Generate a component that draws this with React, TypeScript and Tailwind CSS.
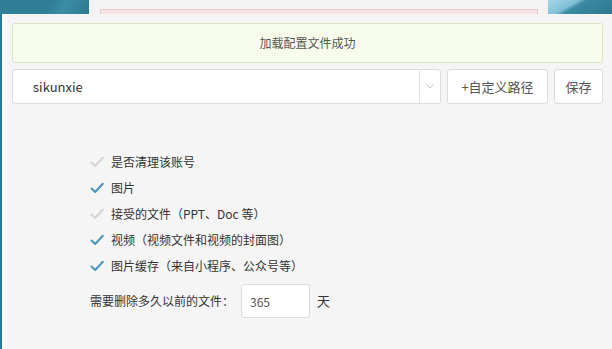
import { useState } from 'react';

type Option = {
  label: string;
  checked: boolean;
};

const initialOptions: Option[] = [
  { label: '是否清理该账号', checked: false },
  { label: '图片', checked: true },
  { label: '接受的文件（PPT、Doc 等）', checked: false },
  { label: '视频（视频文件和视频的封面图）', checked: true },
  { label: '图片缓存（来自小程序、公众号等）', checked: true },
];

const CheckMark = ({ checked }: { checked: boolean }) => (
  <svg width="14" height="12" viewBox="0 0 14 12" className="shrink-0">
    <path
      d="M1.5 6.5 L5.2 10 L12.8 1.8"
      fill="none"
      stroke={checked ? '#4d93b9' : '#d4d4d4'}
      strokeWidth="2"
      strokeLinecap="round"
      strokeLinejoin="round"
    />
  </svg>
);

const App = () => {
  const [options, setOptions] = useState<Option[]>(initialOptions);
  const [days, setDays] = useState('365');

  const toggle = (index: number) => {
    setOptions(options.map((o, i) => (i === index ? { ...o, checked: !o.checked } : o)));
  };

  return (
    <div
      className="flex h-[349px] w-[612px] flex-col overflow-hidden bg-[#2d7a92] text-[#333]"
      style={{ fontFamily: '"Noto Sans CJK SC", "Noto Sans", sans-serif' }}
    >
      {/* page behind the dialog */}
      <div className="flex h-[14px] shrink-0">
        <div className="w-[89px] bg-[linear-gradient(120deg,#2f7f98_0%,#2f7f98_55%,#3b8ea6_70%,#2c7890_100%)]" />
        <div className="flex w-[459px] flex-col bg-[#f3f3f3] pt-[9px] pl-[11px] pr-[10px]">
          <div className="h-[5px] border-x border-t border-[#e7c9c9] bg-[#f7e3e3]" />
        </div>
        <div className="flex-1 bg-[linear-gradient(150deg,#a8d6e6_0%,#7fc0d6_35%,#3a8aa3_45%,#2c7890_100%)]" />
      </div>

      <div className="flex flex-1 pl-[2px]">
        <div className="w-[3px] bg-[#fbfbfb]" />
        <div className="flex flex-1 flex-col bg-[#f5f5f5] pt-[9px] pr-[9px] pl-[7px]">
          <div className="flex h-[40px] items-center justify-center rounded-[3px] border border-[#d6e6bf] bg-[#f7fdea] text-[12px] text-[#555]">
            加载配置文件成功
          </div>

          <div className="mt-[6px] flex h-[35px] gap-[6px]">
            <div className="flex flex-1 rounded-[3px] border border-[#dcdcdc] bg-white">
              <div className="flex flex-1 items-center pl-[20px] text-[13px] text-[#333]">sikunxie</div>
              <div className="flex w-[21px] items-center justify-center border-l border-[#e3e3e3]">
                <svg width="8" height="5" viewBox="0 0 8 5">
                  <path d="M0.5 0.5 L4 4 L7.5 0.5" fill="none" stroke="#c8c8c8" strokeWidth="1" />
                </svg>
              </div>
            </div>
            <button className="flex w-[101px] items-center justify-center rounded-[3px] border border-[#dcdcdc] bg-white text-[13px] text-[#555]">
              +自定义路径
            </button>
            <button className="flex w-[49px] items-center justify-center rounded-[3px] border border-[#dcdcdc] bg-white text-[13px] text-[#555]">
              保存
            </button>
          </div>

          <div className="mt-[45px] flex flex-col pl-[78px]">
            {options.map((option, index) => (
              <div
                key={option.label}
                className="flex h-[26px] cursor-pointer items-center gap-[7px] text-[12px] text-[#333]"
                onClick={() => toggle(index)}
              >
                <CheckMark checked={option.checked} />
                <span>{option.label}</span>
              </div>
            ))}
          </div>

          <div className="mt-[5px] flex items-center pl-[78px] text-[12px] text-[#333]">
            <span className="w-[151px]">需要删除多久以前的文件：</span>
            <input
              value={days}
              onChange={(e) => setDays(e.target.value)}
              className="h-[34px] w-[69px] rounded-[3px] border border-[#dcdcdc] bg-white pl-[8px] text-[12px] text-[#555] outline-none"
            />
            <span className="ml-[7px] text-[13px]">天</span>
          </div>
        </div>
      </div>
    </div>
  );
};

export default App;
